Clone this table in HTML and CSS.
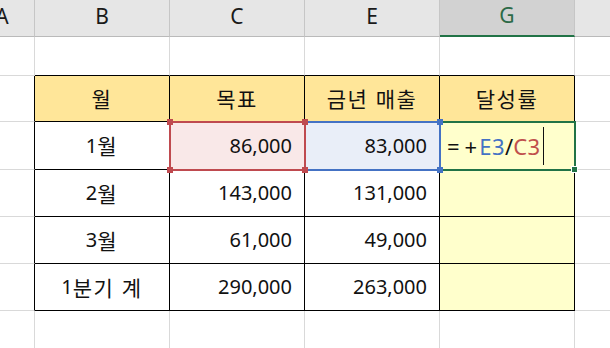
FILE: index.html
```html
<!DOCTYPE html>
<html lang="ko">
<head>
<meta charset="utf-8">
<title>Sheet</title>
<link rel="stylesheet" href="styles.css">
</head>
<body>
<div class="sheet">
  <div class="cell ch">A</div>
  <div class="cell ch">B</div>
  <div class="cell ch">C</div>
  <div class="cell ch">E</div>
  <div class="cell ch sel">G</div>
  <div class="cell ch"></div>

  <div class="cell"></div>
  <div class="cell tb"></div>
  <div class="cell tb"></div>
  <div class="cell tb"></div>
  <div class="cell tb"></div>
  <div class="cell"></div>

  <div class="cell lb"></div>
  <div class="cell t th ko">월</div>
  <div class="cell t th ko">목표</div>
  <div class="cell t th ko">금년 매출</div>
  <div class="cell t th ko">달성률</div>
  <div class="cell"></div>

  <div class="cell lb"></div>
  <div class="cell t lbl">1<span class="ko">월</span></div>
  <div class="cell t num ref-c">86,000<span class="hd tl"></span><span class="hd tr"></span><span class="hd bl"></span><span class="hd br"></span></div>
  <div class="cell t num ref-e">83,000<span class="hd tl"></span><span class="hd tr"></span><span class="hd bl"></span><span class="hd br"></span></div>
  <div class="cell t gy act"><span class="fx">=</span><span class="fx plus">+</span><span class="fe">E3</span><span class="fx">/</span><span class="fc">C3</span><span class="caret"></span><span class="hd br"></span></div>
  <div class="cell"></div>

  <div class="cell lb"></div>
  <div class="cell t lbl">2<span class="ko">월</span></div>
  <div class="cell t num">143,000</div>
  <div class="cell t num">131,000</div>
  <div class="cell t gy"></div>
  <div class="cell"></div>

  <div class="cell lb"></div>
  <div class="cell t lbl">3<span class="ko">월</span></div>
  <div class="cell t num">61,000</div>
  <div class="cell t num">49,000</div>
  <div class="cell t gy"></div>
  <div class="cell"></div>

  <div class="cell lb"></div>
  <div class="cell t lbl">1<span class="ko">분기 계</span></div>
  <div class="cell t num">290,000</div>
  <div class="cell t num">263,000</div>
  <div class="cell t gy"></div>
  <div class="cell"></div>

  <div class="cell"></div>
  <div class="cell"></div>
  <div class="cell"></div>
  <div class="cell"></div>
  <div class="cell"></div>
  <div class="cell"></div>
</div>
</body>
</html>
```

FILE: styles.css
```css
html, body {
  margin: 0;
  padding: 0;
  background: #ffffff;
  overflow: hidden;
}

body {
  font-family: "Noto Sans", "Noto Sans CJK KR", sans-serif;
  color: #111111;
}

.sheet {
  display: grid;
  grid-template-columns: 65px 135px 135px 135px 135px 72px;
  grid-template-rows: 37px 39px 46px 48px 47px 47px 47px 40px;
  margin-left: -30px;
  width: 622px;
}

.cell {
  box-sizing: border-box;
  position: relative;
  display: flex;
  align-items: center;
  border-right: 1px solid #d9d9d9;
  border-bottom: 1px solid #d9d9d9;
  font-size: 20px;
  line-height: 1;
  white-space: nowrap;
}

.ko {
  font-family: "Noto Sans CJK KR", sans-serif;
  font-size: 21px;
  letter-spacing: 1.5px;
}

.cell.ko {
  font-size: 21px;
}

/* column headers */
.ch {
  background: #e6e6e6;
  border-right-color: #c6c6c6;
  border-bottom-color: #bababa;
  justify-content: center;
  padding-bottom: 4px;
  color: #1a1a1a;
  font-size: 21px;
}

.ch.sel {
  background: #d2d2d2;
  color: #2c6a47;
  border-bottom: 2px solid #217346;
}

/* table borders */
.tb {
  border-bottom-color: #000000;
}

.lb {
  border-right-color: #000000;
}

.t {
  border-right-color: #000000;
  border-bottom-color: #000000;
}

.th {
  background: #ffe699;
  justify-content: center;
}

.lbl {
  justify-content: center;
}

.num {
  justify-content: flex-end;
  padding-right: 12px;
}

.gy {
  background: #ffffcc;
}

/* referenced ranges */
.ref-c {
  background: #f9e8e8;
  z-index: 3;
}

.ref-e {
  background: #e9eef8;
  z-index: 2;
}

.act {
  z-index: 1;
  padding-left: 7px;
  font-size: 22px;
}

.ref-c::after,
.ref-e::after,
.act::after {
  content: "";
  position: absolute;
  top: -1px;
  left: -1px;
  right: -2px;
  bottom: -2px;
  border: 2px solid;
  pointer-events: none;
}

.ref-c::after { border-color: #bf4a4f; }
.ref-e::after { border-color: #4472c4; }
.act::after { border-color: #217346; }

.hd {
  position: absolute;
  width: 6px;
  height: 6px;
  z-index: 1;
}

.ref-c .hd { background: #bf4a4f; }
.ref-e .hd { background: #4472c4; }
.act .hd { background: #217346; border: 1px solid #ffffff; width: 5px; height: 5px; }

.tl { left: -3px; top: -3px; }
.tr { right: -4px; top: -3px; }
.bl { left: -3px; bottom: -4px; }
.br { right: -4px; bottom: -4px; }

.fx { color: #111111; }
.plus { margin-left: 5px; margin-right: 2px; }
.fe { color: #4472c4; letter-spacing: 0.5px; }
.fc { color: #c0504d; letter-spacing: 0.5px; }

.caret {
  display: inline-block;
  width: 1px;
  height: 38px;
  background: #111111;
  margin-left: 2px;
}
```
